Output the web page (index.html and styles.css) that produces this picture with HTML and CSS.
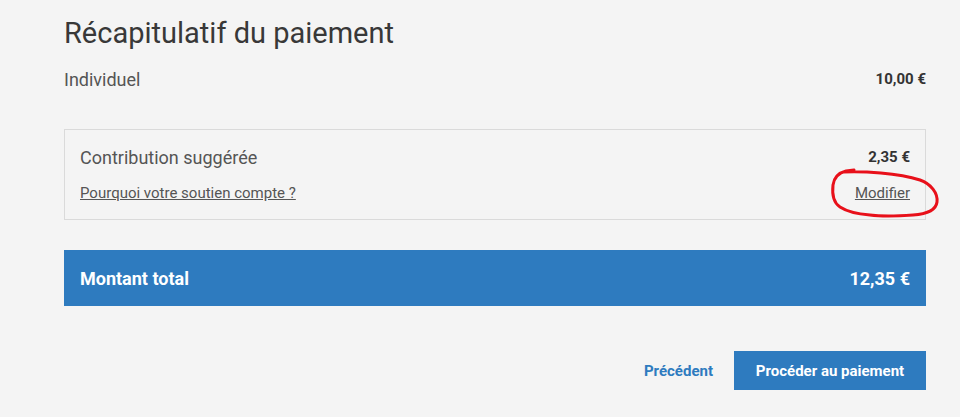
FILE: index.html
```html
<!DOCTYPE html>
<html lang="fr">
<head>
<meta charset="utf-8">
<title>Récapitulatif du paiement</title>
<link rel="stylesheet" href="styles.css">
</head>
<body>
<main class="summary">
  <h1 class="title">Récapitulatif du paiement</h1>
  <div class="row plan">
    <span class="label">Individuel</span>
    <span class="amount">10,00 €</span>
  </div>
  <section class="contrib">
    <div class="row head">
      <span class="label">Contribution suggérée</span>
      <span class="amount">2,35 €</span>
    </div>
    <div class="row links">
      <a class="link" href="#">Pourquoi votre soutien compte ?</a>
      <span class="modify-wrap">
        <a class="link" href="#">Modifier</a>
        <svg class="scribble" width="114" height="52" viewBox="0 0 114 52" aria-hidden="true">
          <path d="M15 4 C35 3 70 5 92 12 C103 16 110 25 109 34 C108 42 100 46 85 47 C70 48 50 48 42 47 C30 46 18 43 12 39 C6 35 4 26 5 17 C6 10 10 5 18 3 L26 2" fill="none" stroke="#e8101a" stroke-width="3" stroke-linecap="round" stroke-linejoin="round"/>
        </svg>
      </span>
    </div>
  </section>
  <div class="total">
    <span>Montant total</span>
    <span>12,35 €</span>
  </div>
  <div class="actions">
    <a class="prev" href="#">Précédent</a>
    <button class="pay" type="button">Procéder au paiement</button>
  </div>
</main>
</body>
</html>
```
FILE: styles.css
```css
html, body {
  margin: 0;
  background: #f4f4f4;
}
body {
  font-family: Roboto, "Noto Sans", sans-serif;
  color: #333;
}
.summary {
  width: 862px;
  margin-left: 64px;
  display: flex;
  flex-direction: column;
}
.title {
  margin: 13px 0 0;
  font-size: 29px;
  font-weight: 400;
  line-height: 40px;
  color: #383838;
}
.row {
  display: flex;
  justify-content: space-between;
  align-items: center;
}
.plan {
  margin-top: 13px;
  height: 26px;
}
.label {
  font-size: 18px;
  color: #555;
}
.amount {
  font-size: 15px;
  font-weight: 700;
  color: #333;
}
.contrib {
  margin-top: 37px;
  border: 1px solid #dadada;
  padding: 15px 15px 16px;
  display: flex;
  flex-direction: column;
  gap: 14px;
}
.contrib .head {
  height: 24px;
}
.contrib .links {
  height: 20px;
}
.link {
  font-size: 15px;
  line-height: 20px;
  color: #555;
  text-decoration: underline;
}
.modify-wrap {
  position: relative;
  display: inline-block;
  line-height: 20px;
}
.scribble {
  position: absolute;
  left: -27px;
  top: -15px;
}
.total {
  margin-top: 30px;
  height: 56px;
  background: #2e7bbf;
  color: #fff;
  display: flex;
  justify-content: space-between;
  align-items: center;
  padding: 0 16px;
  font-size: 18px;
  font-weight: 700;
}
.actions {
  margin-top: 45px;
  display: flex;
  justify-content: flex-end;
  align-items: center;
  gap: 21px;
}
.prev {
  font-size: 15px;
  font-weight: 700;
  color: #2e7bbf;
  text-decoration: none;
}
.pay {
  font-family: inherit;
  border: 0;
  background: #2e7bbf;
  color: #fff;
  font-size: 15px;
  font-weight: 700;
  height: 39px;
  width: 192px;
  padding: 0;
}
```
